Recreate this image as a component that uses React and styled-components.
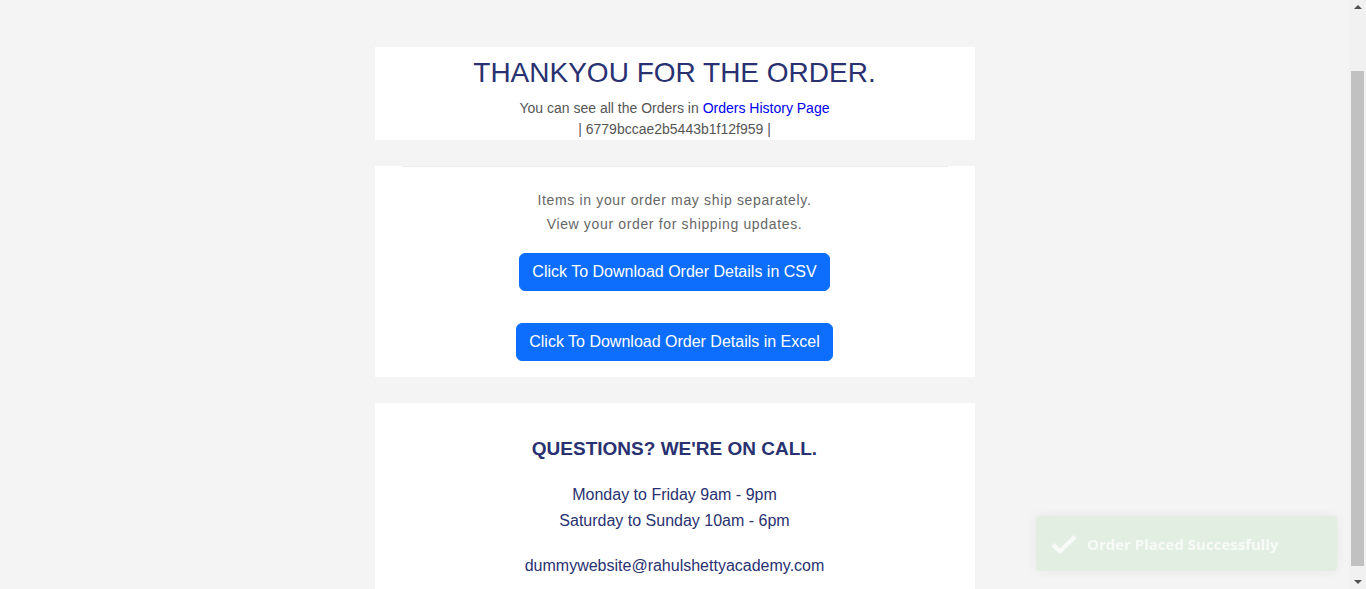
import styled, { createGlobalStyle } from "styled-components"

const GlobalStyle = createGlobalStyle`
    html, body {
        margin: 0;
        padding: 0;
        height: 100%;
        overflow: hidden;
        background-color: #f4f4f4;
        font-family: "Liberation Sans", Arial, sans-serif;
    }
`

const Page = styled.div`
    display: flex;
    height: 100vh;
    overflow: hidden;
`

const Content = styled.main`
    flex: 1;
    display: flex;
    flex-direction: column;
    align-items: center;
    padding-top: 47px;
    gap: 26px;
`

const Card = styled.section`
    width: 600px;
    background-color: #fff;
    box-sizing: border-box;
    text-align: center;
    padding: ${p => p.$pad || "0"};
`

const Title = styled.h1`
    margin: 0;
    padding-top: 1px;
    font-size: 28px;
    font-weight: 400;
    line-height: 50px;
    color: #293171;
`

const Sub = styled.p`
    margin: 0;
    font-size: 14px;
    line-height: 21px;
    color: #555;
    a {
        color: #0000ee;
        text-decoration: none;
    }
`

const Divider = styled.hr`
    margin: 0 27px 21px;
    border: 0;
    border-top: 1px solid #ebebeb;
`

const Note = styled.p`
    margin: 0;
    font-size: 14px;
    line-height: 24px;
    letter-spacing: 0.65px;
    color: #666;
`

const Buttons = styled.div`
    display: flex;
    flex-direction: column;
    align-items: center;
    gap: 32px;
    margin-top: 17px;
`

const Button = styled.button`
    font-family: "Liberation Sans", Arial, sans-serif;
    font-size: 16px;
    line-height: 24px;
    color: #fff;
    background-color: #0d6efd;
    border: 1px solid #0d6efd;
    border-radius: 6px;
    padding: 6px 12px;
    cursor: pointer;
`

const Heading = styled.h2`
    margin: 0;
    font-size: 19px;
    font-weight: 700;
    line-height: 26px;
    color: #293171;
`

const Hours = styled.p`
    margin: 20px 0 0;
    font-size: 16px;
    line-height: 26px;
    color: #293171;
`

const Mail = styled.p`
    margin: 19px 0 0;
    font-size: 16px;
    line-height: 26px;
    color: #293171;
`

const Scrollbar = styled.div`
    width: 17px;
    flex: none;
    background-color: #f1f1f1;
    display: flex;
    flex-direction: column;
    align-items: center;
    justify-content: space-between;
    padding: 5px 0;
    box-sizing: border-box;
`

const Arrow = styled.span`
    width: 0;
    height: 0;
    border-left: 4px solid transparent;
    border-right: 4px solid transparent;
    ${p => p.$down ? "border-top: 4px solid #505050;" : "border-bottom: 4px solid #505050;"}
`

const Track = styled.div`
    flex: 1;
    width: 100%;
    display: flex;
    justify-content: center;
    padding: 62px 0 14px;
    box-sizing: border-box;
`

const Thumb = styled.div`
    width: 13px;
    background-color: #c1c1c1;
`

const Toast = styled.div`
    position: fixed;
    left: 1036px;
    top: 516px;
    width: 301px;
    height: 55px;
    box-sizing: border-box;
    padding-left: 15px;
    display: flex;
    align-items: center;
    gap: 10px;
    background-color: #e3eee3;
    border-radius: 3px;
    box-shadow: 0 0 12px rgba(0, 0, 0, 0.06);
    color: #f7faf7;
    font-family: "Open Sans", sans-serif;
    font-weight: 700;
    font-size: 15px;
`

const Check = () => (
    <svg width="26" height="20" viewBox="0 0 26 20">
        <path d="M2 10.5l7 7L24 2.5" fill="none" stroke="#f7faf7" strokeWidth="4.2" />
    </svg>
)

const App = () => {
    return (
        <Page>
            <GlobalStyle />
            <Content>
                <Card>
                    <Title>THANKYOU FOR THE ORDER.</Title>
                    <Sub>You can see all the Orders in <a href="#">Orders History Page</a></Sub>
                    <Sub>| 6779bccae2b5443b1f12f959 |</Sub>
                </Card>
                <Card $pad="0 0 16px">
                    <Divider />
                    <Note>Items in your order may ship separately.</Note>
                    <Note>View your order for shipping updates.</Note>
                    <Buttons>
                        <Button>Click To Download Order Details in CSV</Button>
                        <Button>Click To Download Order Details in Excel</Button>
                    </Buttons>
                </Card>
                <Card $pad="33px 0 40px">
                    <Heading>QUESTIONS? WE'RE ON CALL.</Heading>
                    <Hours>Monday to Friday 9am - 9pm<br />Saturday to Sunday 10am - 6pm</Hours>
                    <Mail>dummywebsite@rahulshettyacademy.com</Mail>
                </Card>
            </Content>
            <Scrollbar>
                <Arrow />
                <Track><Thumb /></Track>
                <Arrow $down />
            </Scrollbar>
            <Toast>
                <Check />
                Order Placed Successfully
            </Toast>
        </Page>
    )
}

export default App
